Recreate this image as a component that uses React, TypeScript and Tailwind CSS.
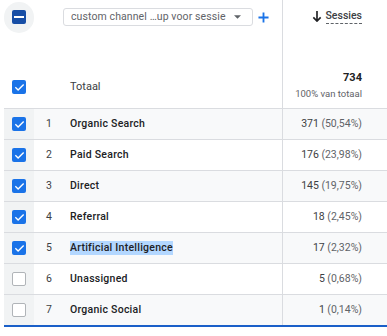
import React from "react";

type Row = { n: number; label: string; value: string; pct: string; checked: boolean; hl?: boolean };

const ROWS: Row[] = [
  { n: 1, label: "Organic Search", value: "371", pct: "(50,54%)", checked: true },
  { n: 2, label: "Paid Search", value: "176", pct: "(23,98%)", checked: true },
  { n: 3, label: "Direct", value: "145", pct: "(19,75%)", checked: true },
  { n: 4, label: "Referral", value: "18", pct: "(2,45%)", checked: true },
  { n: 5, label: "Artificial Intelligence", value: "17", pct: "(2,32%)", checked: true, hl: true },
  { n: 6, label: "Unassigned", value: "5", pct: "(0,68%)", checked: false },
  { n: 7, label: "Organic Social", value: "1", pct: "(0,14%)", checked: false },
];

function Check({ checked }: { checked: boolean }) {
  if (!checked) {
    return <div className="w-[14px] h-[14px] rounded-[2px] border-[1.5px] border-[#b0b4b8] bg-white" />;
  }
  return (
    <div className="w-[14px] h-[14px] rounded-[2px] bg-[#1a73e8] flex items-center justify-center">
      <svg width="11" height="11" viewBox="0 0 24 24" fill="none" stroke="white" strokeWidth="3" strokeLinecap="square">
        <path d="M4 12.5l5 5L20 6.5" />
      </svg>
    </div>
  );
}

export default function App() {
  return (
    <div className="w-[387px] h-[336px] bg-white overflow-hidden text-[#202124]" style={{ fontFamily: "Roboto, Arial, sans-serif" }}>
      <div className="pl-[4px]">
        {/* header */}
        <div className="flex h-[109px] border-b border-[#dadce0]">
          <div className="w-[279px] shrink-0 border-r border-[#dadce0] flex flex-col">
            <div className="flex items-center h-[34px]">
              <div className="w-[30px] flex justify-center">
                <div className="w-[31px] h-[31px] rounded-full bg-[#f1f3f4] flex items-center justify-center">
                  <div className="w-[14px] h-[14px] rounded-[2px] bg-[#174ea6] flex items-center justify-center">
                    <div className="w-[10px] h-[2px] bg-white" />
                  </div>
                </div>
              </div>
              <div className="ml-[29px] w-[190px] h-[18px] border border-[#dadce0] rounded-[3px] flex items-center pl-[7px] pr-[11px]">
                <span className="text-[10.5px] text-[#5f6368] tracking-[0.1px] whitespace-nowrap">custom channel …up voor sessie</span>
                <svg width="7" height="4" viewBox="0 0 8 4" className="ml-auto">
                  <path d="M0 0h8L4 4z" fill="#5f6368" />
                </svg>
              </div>
              <svg width="11" height="11" viewBox="0 0 12 12" className="ml-[5px]">
                <path d="M6 0.5v11M0.5 6h11" stroke="#1a73e8" strokeWidth="2" />
              </svg>
            </div>
            <div className="flex-1 flex items-end pb-[14px]">
              <div className="w-[30px] flex justify-center">
                <Check checked />
              </div>
              <span className="ml-[36px] text-[11px] text-[#3c4043] leading-[14px]">Totaal</span>
            </div>
          </div>
          <div className="flex-1 flex flex-col items-end pr-[25px]">
            <div className="h-[34px] flex items-center gap-[4px] pb-[2px]">
              <svg width="10" height="11" viewBox="0 0 10 12">
                <path d="M5 0v10.5M1 7l4 4 4-4" stroke="#202124" strokeWidth="1.8" fill="none" />
              </svg>
              <span className="text-[10.5px] font-medium text-[#3c4043] border-b border-dashed border-[#5f6368] leading-[14px]">Sessies</span>
            </div>
            <div className="mt-auto pb-[8px] flex flex-col items-end">
              <span className="text-[11px] font-bold leading-[14px]">734</span>
              <span className="text-[9.5px] text-[#5f6368] mt-[3px] leading-[12px]">100% van totaal</span>
            </div>
          </div>
        </div>
        {/* rows */}
        {ROWS.map((r) => (
          <div key={r.n} className={`flex h-[31px] border-b border-[#dadce0] ${r.n % 2 === 1 ? "bg-[#f8f9fa]" : "bg-white"}`}>
            <div className="w-[279px] shrink-0 border-r border-[#dadce0] flex items-center">
              <div className="w-[30px] self-stretch bg-[#f1f3f4] flex items-center justify-center">
                <Check checked={r.checked} />
              </div>
              <span className="w-[30px] text-center text-[10.5px] text-[#3c4043]">{r.n}</span>
              <span className={`ml-[6px] text-[10.5px] font-medium tracking-[0.25px] text-[#202124] leading-[14px] ${r.hl ? "bg-[#b3d7ff]" : ""}`}>{r.label}</span>
            </div>
            <div className="flex-1 flex items-center justify-end pr-[25px] text-[10.5px]">
              <span className="text-[#3c4043]">{r.value}</span>
              <span className="text-[#5f6368] ml-[2.5px]">{r.pct}</span>
            </div>
          </div>
        ))}
        <div className="h-[2px] bg-[#1a5fc8] -mt-[1px]" />
      </div>
    </div>
  );
}
